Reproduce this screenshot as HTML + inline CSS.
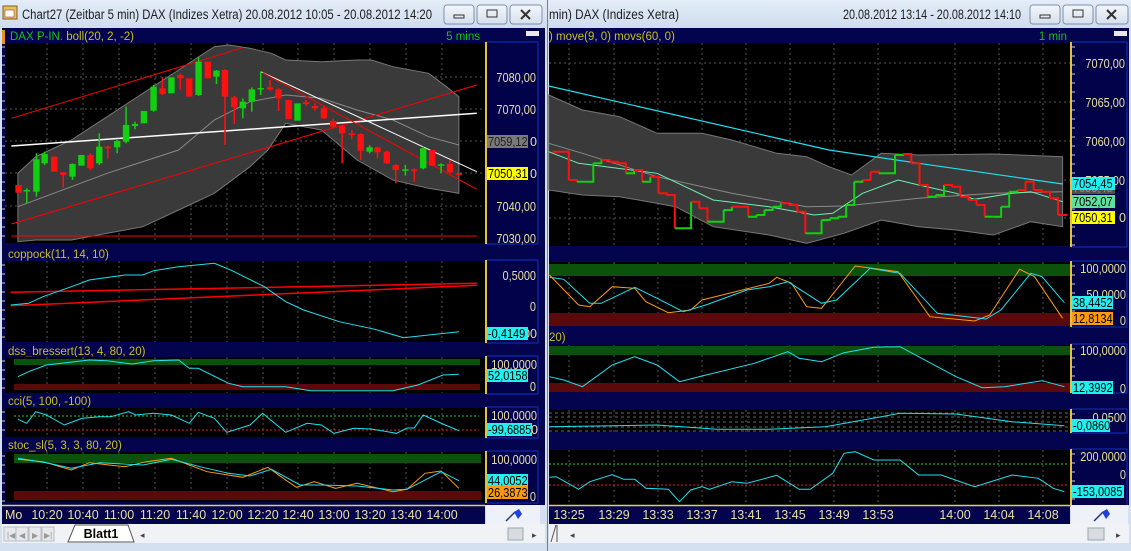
<!DOCTYPE html>
<html><head><meta charset="utf-8">
<style>
html,body{margin:0;padding:0;width:1131px;height:551px;overflow:hidden;background:#dce6f3;}
svg{display:block;font-family:"Liberation Sans",sans-serif;}
</style></head>
<body>
<svg id="s" width="1131" height="551" viewBox="0 0 1131 551" xmlns="http://www.w3.org/2000/svg">
<defs>
<linearGradient id="tb" x1="0" y1="0" x2="0" y2="1"><stop offset="0" stop-color="#e4edf8"/><stop offset="1" stop-color="#cfdcee"/></linearGradient>
<linearGradient id="btn" x1="0" y1="0" x2="0" y2="1"><stop offset="0" stop-color="#f4f7fb"/><stop offset="1" stop-color="#d5dfec"/></linearGradient>
</defs>
<rect x="0" y="0" width="547" height="551" fill="#d4e0f0"/>
<rect x="0" y="0" width="547" height="28" fill="url(#tb)"/>
<rect x="548" y="0" width="583" height="551" fill="#d4e0f0"/>
<rect x="548" y="0" width="583" height="28" fill="url(#tb)"/>
<line x1="547.5" y1="0" x2="547.5" y2="551" stroke="#6d7f99"/>
<rect x="3" y="6" width="14" height="13" fill="#e8c060" stroke="#806020"/><rect x="5" y="10" width="9" height="7" fill="#fff" stroke="#a04040" stroke-width=".6"/>
<text x="22" y="19" font-size="13.5" fill="#202020" textLength="410" lengthAdjust="spacingAndGlyphs">Chart27 (Zeitbar 5 min)  DAX (Indizes Xetra) 20.08.2012 10:05 - 20.08.2012 14:20</text>
<text x="549" y="19" font-size="13.5" fill="#202020" textLength="130" lengthAdjust="spacingAndGlyphs">min)  DAX (Indizes Xetra)</text>
<text x="843" y="19" font-size="13.5" fill="#202020" textLength="178" lengthAdjust="spacingAndGlyphs">20.08.2012 13:14 - 20.08.2012 14:10</text>
<g id="g"></g>
</svg>
<script>
var S=document.getElementById('g');var h='';
function R(x,y,w,hh,f,extra){h+='<rect x="'+x+'" y="'+y+'" width="'+w+'" height="'+hh+'" fill="'+f+'" '+(extra||'')+'/>';}
function L(x1,y1,x2,y2,c,w,extra){h+='<line x1="'+x1+'" y1="'+y1+'" x2="'+x2+'" y2="'+y2+'" stroke="'+c+'" stroke-width="'+(w||1)+'" '+(extra||'')+'/>';}
function T(x,y,t,c,sz,anc,extra){h+='<text x="'+x+'" y="'+y+'" fill="'+c+'" font-size="'+(sz||12)+'" '+(anc?'text-anchor="'+anc+'"':'')+' '+(extra||'')+'>'+t+'</text>';}
function P(pts,ox,oy,sx,sy,c,w,fill){var s=pts.map(function(p){return (ox+p[0]/sx).toFixed(1)+','+(oy+p[1]/sy).toFixed(1)}).join(' ');
 if(fill)h+='<polygon points="'+s+'" fill="'+fill+'" stroke="'+(c||'none')+'" stroke-width="1"/>';else h+='<polyline points="'+s+'" fill="none" stroke="'+c+'" stroke-width="'+(w||1)+'"/>';}
function btns(x){[[x,'min'],[x+33,'max'],[x+66,'x']].forEach(function(b,i){R(b[0],5,i==2?32:30,19,'url(#btn)','stroke="#7f8fa8" rx="3"');
 var cx=b[0]+15;if(i==0)R(cx-5,15,10,3,'none','stroke="#333"');if(i==1)R(cx-5,10,10,7,'none','stroke="#333"');
 if(i==2){L(cx-4,10,cx+5,19,'#333',2);L(cx+5,10,cx-4,19,'#333',2);}});}
btns(444);btns(1030);
var NAV='#03034e';
R(2,28,543,477,NAV);R(549,28,580,477,NAV);
T(10,40,'<tspan fill="#18c018">DAX P-IN.</tspan> <tspan fill="#c8c020">boll(20, 2, -2)</tspan>','#c8c020',11.5);
T(480,40,'5 mins','#18c018',11.5,'end');
R(2,30,3,14,'#e89020');
R(526,31,13,5,'#e8e8e8');R(1114,31,13,5,'#e8e8e8');
T(549,40,') move(9, 0) movs(60, 0)','#c8c020',11.5);
T(1067,40,'1 min','#18c018',11.5,'end');
T(8,258,'coppock(11, 14, 10)','#c8c020',11.5);
T(8,355,'dss_bressert(13, 4, 80, 20)','#c8c020',11.5);
T(8,405,'cci(5, 100, -100)','#c8c020',11.5);
T(8,449,'stoc_sl(5, 3, 3, 80, 20)','#c8c020',11.5);
T(549,341,'20)','#c8c020',11.5);
var LP=[[43,243],[261,342],[357,393],[408,437],[452,502]];
var RP=[[43,246],[262,326],[345,392],[410,432],[450,505]];
LP.forEach(function(p){R(5,p[0],480,p[1]-p[0],'#000');R(486,p[0]-1,52,p[1]-p[0]+2,'#02024a','stroke="#1030c0"');L(486,p[0]-1,486,p[1]+1,'#e0c040',2);
 for(var y=p[0]+4;y<p[1];y+=9)L(2,y,5,y,'#ccc',1);});
RP.forEach(function(p){R(549,p[0],521,p[1]-p[0],'#000');R(1071,p[0]-1,56,p[1]-p[0]+2,'#02024a','stroke="#1030c0"');L(1071,p[0]-1,1071,p[1]+1,'#e0c040',2);
 for(var y=p[0]+4;y<p[1];y+=9)L(1071,y,1075,y,'#ccc',1);});
var lx=[47,83,119,155,191,227,263,298,334,370,406,442];
var rx=[569,614,658,702,746,790,834,878,955,999,1043];
LP.forEach(function(p){lx.forEach(function(x){L(x,p[0],x,p[1],'#555',1,'stroke-dasharray="2,3"');});});
RP.forEach(function(p){rx.forEach(function(x){L(x,p[0],x,p[1],'#555',1,'stroke-dasharray="2,3"');});});
[77,109,141,173,206].forEach(function(y){L(5,y,485,y,'#555',1,'stroke-dasharray="2,3"');});
[63,102,141,180,218].forEach(function(y){L(549,y,1070,y,'#555',1,'stroke-dasharray="2,3"');});
var lsx=2.8,lsy=3;
P([[50,520],[100,470],[200,420],[300,350],[400,280],[500,210],[550,175],[600,140],[640,135],[700,145],[760,160],[800,180],[900,185],[1000,180],[1040,180],[1100,200],[1200,220],[1250,260],[1285,290],[1285,580],[1200,565],[1100,540],[1000,480],[900,390],[800,370],[750,450],[700,500],[600,580],[500,630],[400,680],[300,700],[200,720],[100,720],[50,725]],0,0,lsx,lsy,'#777',1,'#3a3a3a');
P([[50,620],[200,560],[300,520],[500,450],[600,360],[700,305],[800,285],[900,295],[1000,330],[1100,360],[1200,410],[1285,435]],0,0,lsx,lsy,'#8a8a8a');
P([[32,355],[680,143]],0,0,lsx,lsy,'#f00');
P([[32,672],[1335,255]],0,0,lsx,lsy,'#f00');
P([[32,708],[1335,708]],0,0,lsx,lsy,'#f00');
P([[32,438],[1335,340]],0,0,lsx,lsy,'#fff',1.5);
P([[730,215],[1335,515]],0,0,lsx,lsy,'#fff');
P([[735,218],[1335,568]],0,0,lsx,lsy,'#f00');
var C=[[52,'r',555,578],[75,'g',570,574,565,610],[102,'g',478,575,460,590],[125,'g',462,490,455,495],[152,'r',470,515],[177,'r',517,525,517,562],[203,'g',492,530,490,540],[228,'g',465,497],[253,'r',465,505,460,510],[278,'g',440,490,400,495],[302,'r',440,445,438,475],[328,'g',423,442,420,460],[353,'g',375,425,320,430],[378,'g',372,378,365,388],[403,'g',333,370],[430,'g',260,332,255,335],[455,'r',265,282,232,285],[480,'g',232,280],[505,'r',225,235,220,270],[530,'r',235,290],[556,'g',185,285,172,288],[582,'r',185,235],[606,'g',212,230,210,252],[630,'r',210,290,208,435],[656,'r',292,322,288,372],[680,'g',305,325,295,355],[705,'g',268,305,262,335],[730,'g',264,268,215,285],[756,'r',262,268,240,272],[780,'r',268,295,265,333],[808,'r',300,357],[833,'g',310,362],[857,'r',307,312,300,318],[882,'r',318,325,310,332],[907,'r',325,355,320,357],[933,'r',363,380,355,385],[958,'r',378,400,375,490],[985,'r',400,405,390,418],[1010,'r',402,452,400,480],[1035,'g',442,455,436,460],[1057,'r',442,457,440,475],[1083,'r',455,490,452,492],[1108,'r',495,510,492,550],[1135,'g',508,512,495,527],[1160,'r',508,510,505,545],[1185,'g',445,505,440,508],[1210,'r',450,497],[1235,'g',493,496,490,520],[1260,'r',492,517,480,520],[1285,'r',520,523]];
C.forEach(function(c){var x=c[0]/lsx,col=c[1]=='r'?'#ff1010':'#10d010';var t=c[2]/3,b=c[3]/3;
 if(c[4])L(x,c[4]/3,x,c[5]/3,col,1.5);R(x-3.2,t,6.4,Math.max(b-t,1.5),col);});
var rsx=2.676;
P([[10,285],[100,330],[200,350],[300,400],[420,400],[500,420],[620,460],[700,470],[760,500],[820,525],[900,460],[1000,465],[1200,462],[1385,470],[1385,680],[1300,665],[1200,705],[1100,690],[1000,680],[900,660],[800,700],[700,730],[600,705],[450,680],[350,620],[200,590],[100,585],[10,570]],545,0,rsx,3,'#777',1,'#3a3a3a');
P([[10,430],[100,460],[300,530],[500,580],[700,620],[800,618],[1000,595],[1200,580],[1385,575]],545,0,rsx,3,'#8a8a8a');
P([[10,258],[760,450],[1000,490],[1385,552]],545,0,rsx,3,'#20e0f0',1.2);
P([[10,455],[90,490],[300,520],[450,600],[600,620],[720,645],[770,640],[850,580],[945,540],[1000,555],[1100,580],[1150,598],[1250,580],[1300,575],[1385,605]],545,0,rsx,3,'#70f0b0');
var B='455r 455r 540r 545r 545g 490g 480g 485r 490r 520r 510g 545r 530g 580r 585r 685r 685g 605g 625r 665r 665g 630g 620g 620r 650r 645g 630g 620g 610g 615r 635r 700r 700g 660g 655g 650g 615g 545g 540g 515r 520r 520g 465g 462g 490r 555r 590r 585g 555g 560r 590r 600r 615r 650r 650g 620g 575g 570g 545r 570r 575r 595r 645r 648r'.split(' ');
var px=20,step=(1395-20)/(B.length-1),py=parseInt(B[0]);
B.forEach(function(b,i){var y=parseInt(b),col=b.slice(-1)=='r'?'#ff1010':'#10d010';var x=20+i*step;
 h+='<polyline points="'+(545+px/rsx).toFixed(1)+','+(py/3).toFixed(1)+' '+(545+x/rsx).toFixed(1)+','+(py/3).toFixed(1)+' '+(545+x/rsx).toFixed(1)+','+(y/3).toFixed(1)+'" fill="none" stroke="'+col+'" stroke-width="2"/>';px=x;py=y;});
P([[30,157],[1335,130]],0,240,2.8,3,'#f00',1.5);P([[30,197],[1335,136]],0,240,2.8,3,'#f00',1.5);
P([[30,195],[80,190],[120,170],[200,140],[250,120],[350,105],[400,105],[430,92],[500,80],[600,70],[650,92],[740,140],[800,185],[850,210],[950,245],[1050,268],[1130,293],[1200,285],[1285,275]],0,240,2.8,3,'#20e0f0');
R(14,359,466,6,'#0c520c');R(14,384,466,6,'#5a0a0a');
P([[50,410],[80,395],[130,375],[250,360],[300,362],[370,372],[430,362],[500,360],[530,385],[555,385],[640,430],[680,440],[800,440],[870,452],[1100,452],[1170,435],[1240,405],[1285,403]],0,240,2.8,3,'#20e0f0');
L(14,416,479,416,'#20d020',1,'stroke-dasharray="2,2"');L(14,430,479,430,'#e02020',1,'stroke-dasharray="2,2"');
P([[50,58],[75,70],[100,35],[130,45],[180,75],[230,55],[280,50],[310,50],[360,35],[380,45],[430,40],[480,45],[530,70],[555,37],[600,55],[635,97],[700,75],[735,40],[800,97],[860,70],[900,75],[935,100],[990,85],[1040,87],[1110,100],[1140,84],[1160,84],[1185,45],[1240,72],[1285,92]],0,400,2.8,3,'#20e0f0');
R(14,454,467,9,'#0c520c');R(14,491,467,9,'#5a0a0a');
P([[50,178],[120,185],[200,210],[250,188],[350,200],[410,185],[480,175],[580,215],[680,232],[750,202],[800,240],[830,262],[880,245],[940,265],[1000,250],[1100,275],[1140,268],[1190,220],[1235,213],[1285,265]],0,400,2.8,3,'#ff9a10');
P([[50,175],[130,188],[200,205],[280,188],[400,195],[480,178],[560,200],[640,220],[700,228],[760,208],[840,255],[900,255],[1000,258],[1100,270],[1140,268],[1235,215],[1285,242]],0,400,2.8,3,'#20e0f0');
R(549,264,521,12,'#0c520c');R(549,313,521,13,'#5a0a0a');
P([[12,105],[90,195],[120,200],[180,140],[240,145],[270,185],[330,218],[390,210],[420,180],[600,130],[620,112],[660,130],[700,200],[740,205],[830,78],[945,95],[1030,230],[1150,243],[1190,225],[1270,88],[1310,110],[1385,235]],545,240,rsx,3,'#ff9a10');
P([[12,112],[50,118],[120,190],[150,190],[240,142],[300,175],[370,215],[430,195],[540,150],[600,140],[650,125],[740,190],[780,180],[870,85],[950,100],[1050,220],[1180,237],[1220,210],[1300,100],[1330,110],[1390,188]],545,240,rsx,3,'#20e0f0');
R(549,346,521,9,'#0c520c');R(549,383,521,9,'#5a0a0a');
P([[12,410],[50,420],[100,440],[180,375],[240,350],[300,375],[360,425],[420,408],[560,370],[650,335],[680,355],[740,365],[800,338],[880,322],[950,320],[1100,410],[1170,443],[1230,440],[1330,422],[1390,440]],545,240,rsx,3,'#20e0f0');
[413,417,422,427,431].forEach(function(y){L(549,y,1070,y,'#666',1,'stroke-dasharray="3,3"');});
P([[12,560],[300,555],[460,568],[600,568],[750,560],[900,530],[950,520],[1100,522],[1250,545],[1390,557]],545,240,rsx,3,'#20e0f0');
L(549,464,1069,464,'#20d020',1,'stroke-dasharray="2,2"');L(549,485,1069,485,'#e02020',1,'stroke-dasharray="2,2"');
P([[12,712],[30,710],[90,748],[120,725],[180,704],[210,718],[240,718],[270,745],[330,748],[360,785],[390,750],[420,740],[440,748],[500,725],[540,730],[620,706],[680,748],[710,748],[770,700],[800,640],[830,635],[880,660],[950,660],[1000,705],[1060,705],[1150,740],[1250,705],[1320,715],[1360,745],[1390,755]],545,240,rsx,3,'#20e0f0');
var Y='#e8e0a0';
function W(t){var w=0;for(var i=0;i<t.length;i++){var c=t[i];w+=(c==','?3:c=='-'?3.8:6.1);}return w.toFixed(1);}
function AL(x,y,t){T(x,y,t,Y,12.5,'end','textLength="'+W(t)+'" lengthAdjust="spacingAndGlyphs"');}
function BX(x,w,y,t,bg,fg){R(x,y-11,w,13,bg);T(x+1,y,t,fg||'#000',12.5,'','textLength="'+W(t)+'" lengthAdjust="spacingAndGlyphs"');}
AL(536,82,'7080,00');AL(536,114,'7070,00');AL(536,211,'7040,00');AL(536,243,'7030,00');
T(537,146,'0',Y,12.5,'end');BX(487,41,146,'7059,12','#7a7a7a','#202020');
T(537,178,'0',Y,12.5,'end');BX(487,41,178,'7050,31','#ffff00');
AL(536,280,'0,5000');AL(536,311,'0');T(537,338,'00',Y,12.5,'end');BX(487,41,338,'-0,4149','#20f0f0');
AL(537,369,'100,0000');BX(487,41,380,'52,0158','#20f0f0');AL(536,391,'0');
AL(537,420,'100,0000');T(538,434,'0',Y,12.5,'end');BX(487,45,434,'-99,6885','#20f0f0');
AL(537,464,'100,0000');BX(487,41,485,'44,0052','#20f0f0');BX(487,41,497,'26,3873','#ff9a10');AL(536,501,'0');
AL(1125,68,'7070,00');AL(1125,107,'7065,00');AL(1125,146,'7060,00');AL(1125,185,'7055,00');
T(1126,222,'0',Y,12.5,'end');
BX(1072,43,192,'7053,45','#505050','#909090');BX(1072,43,188,'7054,45','#20f0f0');BX(1072,43,206,'7052,07','#60e0a0');BX(1072,43,222,'7050,31','#ffff00');
AL(1126,273,'100,0000');AL(1126,299,'50,0000');BX(1072,41,307,'38,4452','#20f0f0');BX(1072,41,323,'12,8134','#ff9a10');AL(1126,325,'0');
AL(1126,355,'100,0000');BX(1072,41,392,'12,3992','#20f0f0');AL(1126,393,'0');
AL(1126,422,'0,0500');BX(1072,38,430,'-0,0860','#20f0f0');
AL(1126,461,'200,0000');AL(1126,479,'0');BX(1072,52,496,'-153,0085','#20f0f0');
R(2,505,483,19,NAV);L(2,505.5,485,505.5,'#e0d060',1.5);R(486,505,54,19,'#eef2f8');
R(549,505,521,19,NAV);L(549,505.5,1070,505.5,'#e0d060',1.5);R(1071,505,57,19,'#eef2f8');
T(5,519,'Mo',Y,12.5);lx.forEach(function(x,i){T(x,519,['10:20','10:40','11:00','11:20','11:40','12:00','12:20','12:40','13:00','13:20','13:40','14:00'][i],Y,12.5,'middle');});
rx.forEach(function(x,i){T(x,519,['13:25','13:29','13:33','13:37','13:41','13:45','13:49','13:53','14:00','14:04','14:08'][i],Y,12.5,'middle');});
[506,1094].forEach(function(x){L(x,521,x+9,512,'#203080',1.5);h+='<polygon points="'+(x+8)+',512 '+(x+13)+',509 '+(x+16)+',514 '+(x+12)+',519" fill="#2040e0"/>';});
R(2,524,543,19,'#f0f2f5');R(549,524,580,19,'#f0f2f5');
[4,16,29,42].forEach(function(x){R(x,527,12,14,'#e6e8ec','stroke="#b8bcc4"');});
T(7,538,'|◀','#999',8);T(19,538,'◀','#999',8);T(32,538,'▶','#999',8);T(44,538,'▶|','#999',8);
h+='<polygon points="68,542 75,525 128,525 134,542" fill="#fff" stroke="#555"/>';
T(101,538,'Blatt1','#000',12.5,'middle','font-weight="bold"');
T(140,538,'◂','#444',9);R(508,528,15,12,'#d8dce2','stroke="#9aa"');T(532,538,'▸','#444',9);
L(551,542,556,525,'#555');L(557,525,557,542,'#555');
T(570,538,'◂','#444',9);R(1088,528,16,12,'#d8dce2','stroke="#9aa"');T(1116,538,'▸','#444',9);
S.innerHTML=h;
</script>
</body></html>
